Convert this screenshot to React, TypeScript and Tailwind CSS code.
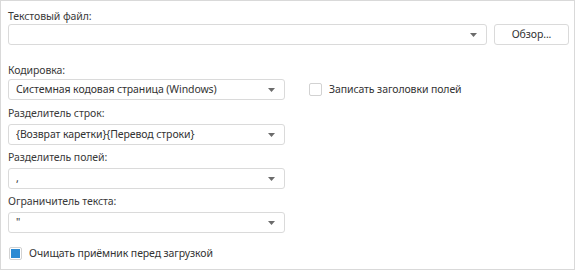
import type { ReactNode } from 'react'

function Arrow() {
  return (
    <svg width="7" height="4" viewBox="0 0 7 4" className="shrink-0">
      <path d="M0 0h7L3.5 4z" fill="#6b6b6b" />
    </svg>
  )
}

function Combo({ value, className = '' }: { value?: string; className?: string }) {
  return (
    <div
      className={`flex h-[21px] items-center rounded-[3px] border border-[#dadada] bg-white pl-[7px] pr-[9px] ${className}`}
    >
      <span className="flex-1 truncate leading-[19px] text-[#333]">{value}</span>
      <Arrow />
    </div>
  )
}

function Label({ children, className = '' }: { children: ReactNode; className?: string }) {
  return <div className={`h-4 leading-4 text-[#3a3a3a] ${className}`}>{children}</div>
}

function Check({ checked }: { checked?: boolean }) {
  return (
    <span className="flex h-[13px] w-[13px] shrink-0 items-center justify-center rounded-[2px] border border-[#d2d2d2] bg-white">
      {checked && <span className="h-[9px] w-[9px] bg-[#2b8ad3]" />}
    </span>
  )
}

export default function App() {
  return (
    <div
      className="h-[270px] w-[575px] border border-[#d9d9d9] bg-white pl-[7px] pr-[5px] text-[10.5px] tracking-[-0.1px]"
      style={{ fontFamily: '"Noto Sans", "Open Sans", sans-serif' }}
    >
      <Label className="mt-[7px]">Текстовый файл:</Label>
      <div className="flex gap-[7px]">
        <Combo className="w-[479px]" />
        <button className="h-[21px] w-[75px] rounded-[3px] border border-[#dadada] bg-white text-[#333]">
          Обзор...
        </button>
      </div>

      <Label className="mt-[17px]">Кодировка:</Label>
      <div className="mt-px flex items-center">
        <Combo className="w-[277px]" value="Системная кодовая страница (Windows)" />
        <label className="ml-6 flex items-center gap-[7px] text-[#333]">
          <Check />
          Записать заголовки полей
        </label>
      </div>

      <Label className="mt-[5px]">Разделитель строк:</Label>
      <Combo className="mt-[3px] w-[277px]" value="{Возврат каретки}{Перевод строки}" />

      <Label className="mt-1">Разделитель полей:</Label>
      <Combo className="mt-[3px] w-[277px]" value="," />

      <Label className="mt-1">Ограничитель текста:</Label>
      <Combo className="mt-[3px] w-[277px]" value={'"'} />

      <label className="mt-[14px] flex h-[13px] items-center gap-[7px] pl-px text-[#333]">
        <Check checked />
        Очищать приёмник перед загрузкой
      </label>
    </div>
  )
}
